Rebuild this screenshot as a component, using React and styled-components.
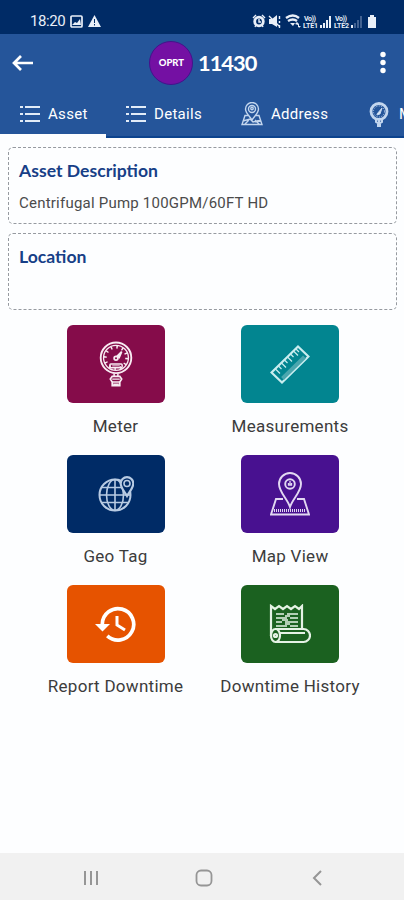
import React from 'react'
import styled, { createGlobalStyle } from 'styled-components'

const GlobalStyle = createGlobalStyle`
  * {
    box-sizing: border-box;
  }

  body {
    margin: 0;
    background: #fdfeff;
    font-family: Roboto, sans-serif;
    overflow: hidden;
  }

  svg {
    display: block;
    flex: none;
  }
`

const Screen = styled.div`
  display: flex;
  flex-direction: column;
  height: 900px;
  overflow: hidden;
  width: 404px;
`

const StatusBar = styled.div`
  align-items: center;
  background: #002b66;
  color: #e9eff8;
  display: flex;
  height: 34px;
  justify-content: space-between;
  padding: 8px 27px 0 30px;
`

const StatusGroup = styled.div`
  align-items: center;
  display: flex;
  gap: 5px;
`

const Time = styled.span`
  font-size: 15px;
  letter-spacing: -0.4px;
  line-height: 18px;
`

const Header = styled.header`
  background: #25559a;
  color: #fff;
  height: 104px;
`

const TitleBar = styled.div`
  align-items: center;
  display: flex;
  height: 57px;
  justify-content: space-between;
  padding: 0 18px 0 12px;
`

const TitleGroup = styled.div`
  align-items: center;
  display: flex;
  gap: 4.5px;
  margin-right: 8px;
`

const Badge = styled.div`
  align-items: center;
  background: #7410a3;
  border: 1.5px solid #44128b;
  border-radius: 50%;
  display: flex;
  font: 900 9.5px Lato, sans-serif;
  height: 44px;
  justify-content: center;
  width: 44px;
`

const Title = styled.h1`
  font: 700 21.8px/28px Lato, sans-serif;
  letter-spacing: -0.9px;
  margin: 0;
  padding-top: 1px;
`

const Tabs = styled.div`
  display: flex;
  height: 47px;
  overflow: hidden;
`

const Tab = styled.div`
  align-items: center;
  border-bottom: ${props => (props.$active ? '4px solid #fdfeff' : '2px solid #0c438e')};
  display: flex;
  flex: none;
  font-size: 15px;
  gap: ${props => props.$gap || 8}px;
  height: 47px;
  letter-spacing: 0.3px;
  padding: ${props => (props.$active ? 3 : 1)}px 0 0 20px;
  width: ${props => props.$width}px;
`

const Cards = styled.section`
  display: flex;
  flex-direction: column;
  gap: 9px;
  padding: 9px 7px 0 8px;
`

const Card = styled.div`
  border: 1.5px dashed #969aa0;
  border-radius: 5px;
  height: 77px;
  padding: 12px 10px;
`

const CardTitle = styled.h2`
  color: #173f87;
  font: 700 17.6px/22px Lato, sans-serif;
  margin: 0;
`

const CardText = styled.p`
  color: #4b4b4b;
  font-size: 15px;
  letter-spacing: 0.22px;
  line-height: 18px;
  margin: 12px 0 0;
`

const Grid = styled.main`
  display: grid;
  flex: 1;
  grid-auto-rows: 130px;
  grid-template-columns: 174.5px 174.5px;
  padding: 15px 28px 0 28.3px;
`

const Item = styled.div`
  align-items: center;
  display: flex;
  flex-direction: column;
`

const Tile = styled.div`
  align-items: center;
  background: ${props => props.$color};
  border-radius: 6px;
  display: flex;
  height: 78px;
  justify-content: center;
  width: 98px;
`

const Label = styled.div`
  color: #3c3c3c;
  font-size: 17px;
  letter-spacing: 0.28px;
  line-height: 22px;
  margin-top: 12px;
  white-space: nowrap;
`

const NavBar = styled.nav`
  align-items: center;
  background: #f1f1f1;
  display: grid;
  grid-template-columns: repeat(3, 113.3px);
  height: 47px;
  justify-content: center;
  justify-items: center;
  padding: 2px 0 0 4px;
`

const ListIcon = () => (
  <svg width="20" height="16" viewBox="0 0 20 16" fill="#e2ecf8">
    {[0, 7, 14].map(y => (
      <React.Fragment key={y}>
        <rect x="0" y={y} width="3" height="2" />
        <rect x="5" y={y} width="15" height="2" />
      </React.Fragment>
    ))}
  </svg>
)

const AddressIcon = () => (
  <svg width="22" height="24" viewBox="0 0 22 24" fill="none" stroke="#c3d6ee" strokeWidth="1.400">
    <path d="M11 18C8 13.500 4.500 11 4.500 7a6.500 6.500 0 0 1 13 0c0 4-3.500 6.500-6.500 11Z" />
    <circle cx="11" cy="7" r="3.500" />
    <circle cx="11" cy="6.500" r="1.200" />
    <path d="M7 13.500H4L1 22.500h20l-3-9h-3M2 19l7-2 3 3 8-2M4 22l4-4M18 22l-4-4" />
  </svg>
)

const GaugeTabIcon = () => (
  <svg width="20" height="25" viewBox="0 0 20 25" fill="none" stroke="#c3d6ee">
    <circle cx="10" cy="9.500" r="8" strokeWidth="2.800" />
    <circle cx="10" cy="9.500" r="5.500" strokeDasharray="1 1.500" />
    <path d="m8 12 5-6-2 6-3 1Z" fill="#dce7f5" />
    <path d="M7 18v2l2 1v3h2v-3l2-1v-2M10 18v6" strokeWidth="2" />
  </svg>
)

const MeterIcon = () => (
  <svg width="34" height="46" viewBox="0 0 36 48" fill="none" stroke="#f8ecf2">
    <circle cx="18" cy="17.500" r="16.200" strokeWidth="2" />
    <circle cx="18" cy="17.500" r="13.200" strokeWidth="1.400" />
    <circle cx="18" cy="17.500" r="11.300" strokeWidth="3" strokeDasharray="1.600 4.317" />
    <path d="m19 16 5-5-3 7" strokeWidth="1.800" fill="#f8ecf2" />
    <circle cx="18" cy="18" r="2" strokeWidth="1.800" />
    <rect x="11.500" y="24" width="13" height="4" rx="1" strokeWidth="1.600" />
    <path d="M14 26h8" strokeWidth="1" />
    <path d="M16 34v3M20 34v3" strokeWidth="1.600" />
    <path d="M14 37h8l2 3-2 3v4h-8v-4l-2-3Z" strokeWidth="1.800" />
    <path d="M14 40h8M14 43h8M15 45.500h6" strokeWidth="1.500" />
  </svg>
)

const RulerIcon = () => (
  <svg width="40" height="40" viewBox="0 0 40 40" fill="none" stroke="#c9edef">
    <path d="M1.500 28.500 28 2.500 38.500 12.500 12 38.500Z" strokeWidth="2.200" />
    <path d="m12.500 34.500 22-21.500" strokeWidth="4" stroke="#4ba6ae" />
    <path d="m5.500 25 4.500 4.500M8.500 22l3 3M11.500 19l4.500 4.500M14.500 16l3 3M17.500 13l4.500 4.500M20.500 10l3 3M23.500 7l4.500 4.500M26 5l3 3" strokeWidth="1.200" />
  </svg>
)

const GlobeIcon = () => (
  <svg width="36" height="36" viewBox="0 0 36 36" fill="none" stroke="#b8cbe3" strokeWidth="1.600">
    <circle cx="17" cy="19" r="15.500" strokeWidth="2" />
    <ellipse cx="17" cy="19" rx="8.500" ry="15.500" />
    <path d="M17 3.500v31M1.500 19h31M4 11.500h26M4 26.500h26" />
    <path d="M29 20c-2.500-4.500-6.300-8-6.300-12.500a6.300 6.300 0 0 1 12.600 0C35.300 12 31.500 15.500 29 20Z" fill="#002b66" strokeWidth="2.200" />
    <circle cx="29" cy="7.500" r="3" />
  </svg>
)

const MapIcon = () => (
  <svg width="40" height="44" viewBox="0 0 40 44" fill="none" stroke="#e2d8f2" strokeWidth="1.900">
    <path d="M20 35C17.500 27 9 20 9 12a11 11 0 0 1 22 0c0 8-8.500 15-11 23Z" />
    <circle cx="20" cy="12" r="4.800" />
    <path d="M20 9v4M18.500 11v2h3v-2" strokeWidth="1.300" />
    <path d="M13 27H6L1 42.500h38L34 27h-7" />
    <path d="M4 38.500h32" strokeDasharray="1 1" strokeWidth="3" />
  </svg>
)

const HistoryIcon = () => (
  <svg width="42" height="36" viewBox="0 0 42 36" fill="none" stroke="#fff" strokeWidth="3.700">
    <path d="M7.300 18A15.700 15.700 0 1 1 12.300 29.800" />
    <path d="M22 10v9l8 5" strokeWidth="3" />
    <path d="M0 18h15l-7.500 7.500Z" fill="#fff" stroke="none" />
  </svg>
)

const ScrollIcon = () => (
  <svg width="42" height="40" viewBox="0 0 42 40" fill="none" stroke="#e5f2e5" strokeWidth="2.200">
    <path d="M2 32V2l4 3 4-3 4 3 4-3 4 3 4-3 4 3 3-3v22" />
    <path d="M6 25h28.500a6.500 6.500 0 0 1 0 13H6M10 29h26" />
    <ellipse cx="6.500" cy="31.500" rx="4.500" ry="6.500" />
    <circle cx="6.500" cy="31.500" r="1.500" />
    <path d="M7 10h8M18 10h11M7 14h11M21 14h8M7 18h6M16 18h13M7 22h11M21 22h8M16 12h5M13 16h6M16 20h5" strokeWidth="1.700" />
  </svg>
)

const BackArrow = () => (
  <svg width="22" height="16" viewBox="0 0 22 16" fill="none" stroke="#fff" strokeWidth="2.700">
    <path d="M21 8H3M9 1 2 8l7 7" />
  </svg>
)

const MoreIcon = () => (
  <svg width="6" height="24" viewBox="0 0 6 24" fill="#fff">
    <circle cx="3" cy="3.500" r="2.700" />
    <circle cx="3" cy="11.500" r="2.700" />
    <circle cx="3" cy="19.500" r="2.700" />
  </svg>
)

const PictureIcon = () => (
  <svg width="13" height="13" viewBox="0 0 13 13" fill="none" stroke="#e9eff8" strokeWidth="1.700">
    <rect x="1" y="1" width="11" height="11" rx="1" />
    <path d="m2 10 3-3 2 1 3-4 1 6Z" fill="#e9eff8" stroke="none" />
  </svg>
)

const WarningIcon = () => (
  <svg width="13" height="12" viewBox="0 0 13 12" fill="#e9eff8">
    <path d="M6.500 0 13 12H0Z" />
    <path d="M6.500 4v4M6.500 9v1.500" stroke="#002b66" />
  </svg>
)

// alarm, mute, wifi, two SIM signals and battery
const PhoneStatus = () => (
  <svg width="125" height="15" viewBox="0 0 125 15" fill="#e9eff8">
    <circle cx="7" cy="7.500" r="4.300" fill="none" stroke="#e9eff8" strokeWidth="2.800" />
    <path d="M1 4 4 1M13 4l-3-3M3 13l1-2M11 13l-1-2M7 5v3h2" fill="none" stroke="#e9eff8" strokeWidth="1.400" />
    <path d="M17 5h3l5-4v12l-5-3h-3Z" />
    <path d="m17 2 11 11M27.500 2v3M27.500 7v2M27.500 11v3" stroke="#e9eff8" strokeWidth="1.400" />
    <path d="M34 4q7-5 13 0M36 7q5-3 9 0" fill="none" stroke="#e9eff8" strokeWidth="2.300" />
    <path d="m38 9 3 3 2-3ZM43 10l2-2 2 2v3h-1v-2ZM46 12h3l-2 2Z" />
    <text x="52" y="7" fontFamily="Roboto, sans-serif" fontSize="7" fontWeight="700" textLength="12">Vo))</text>
    <text x="51" y="14" fontFamily="Roboto, sans-serif" fontSize="7" fontWeight="700" textLength="15">LTE1</text>
    <path d="M68 11h2v3h-2ZM71 9h2v5h-2ZM74 6h2v8h-2ZM77 2h2v12h-2Z" />
    <text x="83" y="7" fontFamily="Roboto, sans-serif" fontSize="7" fontWeight="700" textLength="12">Vo))</text>
    <text x="82" y="14" fontFamily="Roboto, sans-serif" fontSize="7" fontWeight="700" textLength="15">LTE2</text>
    <path d="M99 11h2v3h-2Z" />
    <path d="M102 9h2v5h-2ZM105 6h2v8h-2ZM108 2h2v12h-2Z" fill="#426292" />
    <path d="M116 3h2V1h4v2h2v11h-8Z" />
  </svg>
)

const RecentsIcon = () => (
  <svg width="16" height="16" viewBox="0 0 16 16" stroke="#969696" strokeWidth="2">
    <path d="M2 1v14M8 1v14M14 1v14" />
  </svg>
)

const HomeIcon = () => (
  <svg width="18" height="18" viewBox="0 0 18 18" fill="none" stroke="#969696" strokeWidth="1.800">
    <rect x="1.500" y="1.500" width="15" height="15" rx="4.500" />
  </svg>
)

const NavBackIcon = () => (
  <svg width="11" height="16" viewBox="0 0 11 16" fill="none" stroke="#969696" strokeWidth="2">
    <path d="M9 1 2 8l7 7" />
  </svg>
)

const items = [
  { label: 'Meter', color: '#850c4a', Icon: MeterIcon },
  { label: 'Measurements', color: '#028590', Icon: RulerIcon },
  { label: 'Geo Tag', color: '#002b66', Icon: GlobeIcon },
  { label: 'Map View', color: '#481190', Icon: MapIcon },
  { label: 'Report Downtime', color: '#e65300', Icon: HistoryIcon },
  { label: 'Downtime History', color: '#1b6120', Icon: ScrollIcon },
]

const App = () => (
  <Screen>
    <GlobalStyle />

    <StatusBar>
      <StatusGroup>
        <Time>18:20</Time>
        <PictureIcon />
        <WarningIcon />
      </StatusGroup>
      <PhoneStatus />
    </StatusBar>

    <Header>
      <TitleBar>
        <BackArrow />
        <TitleGroup>
          <Badge>OPRT</Badge>
          <Title>11430</Title>
        </TitleGroup>
        <MoreIcon />
      </TitleBar>

      <Tabs>
        <Tab $active $width={106}>
          <ListIcon />
          Asset
        </Tab>
        <Tab $width={115}>
          <ListIcon />
          Details
        </Tab>
        <Tab $width={128}>
          <AddressIcon />
          Address
        </Tab>
        <Tab $width={120} $gap={10}>
          <GaugeTabIcon />
          M
        </Tab>
      </Tabs>
    </Header>

    <Cards>
      <Card>
        <CardTitle>Asset Description</CardTitle>
        <CardText>Centrifugal Pump 100GPM/60FT HD</CardText>
      </Card>
      <Card>
        <CardTitle>Location</CardTitle>
      </Card>
    </Cards>

    <Grid>
      {items.map(({ label, color, Icon }) => (
        <Item key={label}>
          <Tile $color={color}>
            <Icon />
          </Tile>
          <Label>{label}</Label>
        </Item>
      ))}
    </Grid>

    <NavBar>
      <RecentsIcon />
      <HomeIcon />
      <NavBackIcon />
    </NavBar>
  </Screen>
)

export default App
